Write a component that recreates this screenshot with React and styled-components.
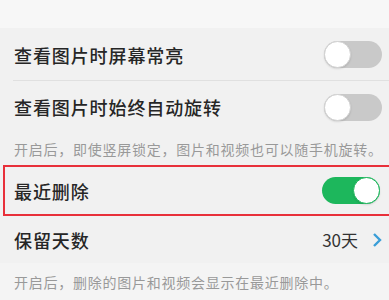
import React from "react";
import styled, { createGlobalStyle } from "styled-components";

const Global = createGlobalStyle`
  html, body { margin: 0; padding: 0; }
  body {
    width: 389px;
    height: 300px;
    overflow: hidden;
    background: #f1f1f1;
    font-family: "Noto Sans CJK SC", "Noto Sans", sans-serif;
  }
`;

const Page = styled.div`
  display: flex;
  flex-direction: column;
  width: 389px;
`;

const TopBand = styled.div`
  height: 28px;
  background: #f7f7f7;
`;

const Row = styled.div`
  display: flex;
  align-items: center;
  justify-content: space-between;
  height: ${(p) => p.h || 52}px;
  padding: 0 7px 0 14px;
  background: #f1f1f1;
  box-sizing: border-box;
  position: relative;
  ${(p) =>
    p.divider &&
    `&::after {
      content: "";
      position: absolute;
      left: 13px;
      right: 0;
      bottom: 0;
      height: 1px;
      background: #e0e0e0;
    }`}
`;

const Label = styled.span`
  font-size: 18px;
  letter-spacing: 0.9px;
  color: #262626;
  font-weight: 500;
`;

const Caption = styled.div`
  display: flex;
  align-items: center;
  height: ${(p) => p.h}px;
  padding-left: 14px;
  font-size: 14px;
  letter-spacing: 0.75px;
  color: #999;
  background: ${(p) => p.bg || "#f1f1f1"};
  box-sizing: border-box;
  white-space: nowrap;
`;

const Highlight = styled.div`
  margin-left: 3px;
  margin-right: -6px;
  border: 2px solid #e8303a;
  height: 51px;
  box-sizing: border-box;
  display: flex;
  align-items: center;
  justify-content: space-between;
  padding: 0 13px 0 9px;
`;

const Track = styled.div`
  width: 58px;
  height: 27px;
  border-radius: 14px;
  background: ${(p) => (p.on ? "#1db75c" : "#c9c9c9")};
  position: relative;
  box-sizing: border-box;
`;

const Knob = styled.div`
  position: absolute;
  top: 0;
  ${(p) => (p.on ? "right: 0;" : "left: 0;")}
  width: 27px;
  height: 27px;
  border-radius: 50%;
  background: #fff;
  box-sizing: border-box;
  border: 1px solid ${(p) => (p.on ? "#1db75c" : "#d2d2d2")};
  box-shadow: 0 1px 2px rgba(0, 0, 0, 0.12);
`;

const Value = styled.div`
  display: flex;
  align-items: center;
  gap: 14px;
  font-size: 17px;
  color: #333;
`;

function Toggle({ on }) {
  return (
    <Track on={on ? 1 : 0}>
      <Knob on={on ? 1 : 0} />
    </Track>
  );
}

export default function App() {
  return (
    <>
      <Global />
      <Page>
        <TopBand />
        <Row h={53} divider>
          <Label>查看图片时屏幕常亮</Label>
          <Toggle />
        </Row>
        <Row h={52}>
          <Label>查看图片时始终自动旋转</Label>
          <Toggle />
        </Row>
        <Caption h={32}>开启后，即使竖屏锁定，图片和视频也可以随手机旋转。</Caption>
        <Highlight>
          <Label>最近删除</Label>
          <Toggle on />
        </Highlight>
        <Row h={47}>
          <Label>保留天数</Label>
          <Value>
            <span>30天</span>
            <svg width="10" height="16" viewBox="0 0 10 16">
              <polyline
                points="2,2 8,8 2,14"
                fill="none"
                stroke="#3a9ed8"
                strokeWidth="2.4"
              />
            </svg>
          </Value>
        </Row>
        <Caption h={37} bg="#f4f4f4">
          开启后，删除的图片和视频会显示在最近删除中。
        </Caption>
      </Page>
    </>
  );
}
